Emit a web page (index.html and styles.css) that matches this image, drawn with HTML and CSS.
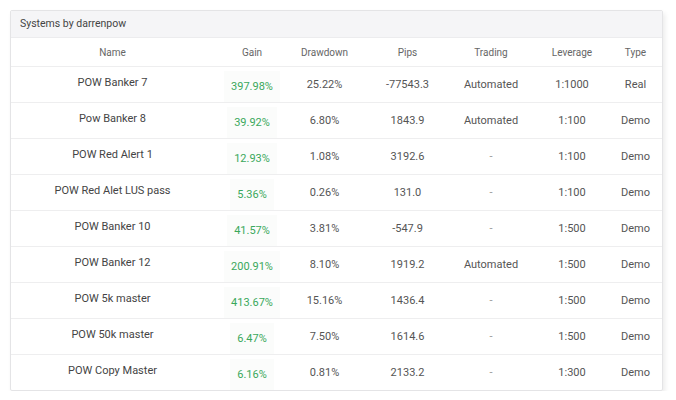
FILE: index.html
```html
<!DOCTYPE html>
<html>
<head>
<meta charset="utf-8">
<link rel="stylesheet" href="styles.css">
</head>
<body>
<div class="card">
  <div class="title">Systems by darrenpow</div>
  <div class="row head">
    <div class="c name">Name</div>
    <div class="c gain">Gain</div>
    <div class="c dd">Drawdown</div>
    <div class="c pips">Pips</div>
    <div class="c trad">Trading</div>
    <div class="c lev">Leverage</div>
    <div class="c type">Type</div>
  </div>
  <div class="row">
    <div class="c name">POW Banker 7</div>
    <div class="c gain"><span class="g">397.98%</span></div>
    <div class="c dd">25.22%</div>
    <div class="c pips">-77543.3</div>
    <div class="c trad">Automated</div>
    <div class="c lev">1:1000</div>
    <div class="c type">Real</div>
  </div>
  <div class="row">
    <div class="c name">Pow Banker 8</div>
    <div class="c gain"><span class="g">39.92%</span></div>
    <div class="c dd">6.80%</div>
    <div class="c pips">1843.9</div>
    <div class="c trad">Automated</div>
    <div class="c lev">1:100</div>
    <div class="c type">Demo</div>
  </div>
  <div class="row">
    <div class="c name">POW Red Alert 1</div>
    <div class="c gain"><span class="g">12.93%</span></div>
    <div class="c dd">1.08%</div>
    <div class="c pips">3192.6</div>
    <div class="c trad dash">-</div>
    <div class="c lev">1:100</div>
    <div class="c type">Demo</div>
  </div>
  <div class="row">
    <div class="c name">POW Red Alet LUS pass</div>
    <div class="c gain"><span class="g">5.36%</span></div>
    <div class="c dd">0.26%</div>
    <div class="c pips">131.0</div>
    <div class="c trad dash">-</div>
    <div class="c lev">1:100</div>
    <div class="c type">Demo</div>
  </div>
  <div class="row">
    <div class="c name">POW Banker 10</div>
    <div class="c gain"><span class="g">41.57%</span></div>
    <div class="c dd">3.81%</div>
    <div class="c pips">-547.9</div>
    <div class="c trad dash">-</div>
    <div class="c lev">1:500</div>
    <div class="c type">Demo</div>
  </div>
  <div class="row">
    <div class="c name">POW Banker 12</div>
    <div class="c gain"><span class="g">200.91%</span></div>
    <div class="c dd">8.10%</div>
    <div class="c pips">1919.2</div>
    <div class="c trad">Automated</div>
    <div class="c lev">1:500</div>
    <div class="c type">Demo</div>
  </div>
  <div class="row">
    <div class="c name">POW 5k master</div>
    <div class="c gain"><span class="g">413.67%</span></div>
    <div class="c dd">15.16%</div>
    <div class="c pips">1436.4</div>
    <div class="c trad dash">-</div>
    <div class="c lev">1:500</div>
    <div class="c type">Demo</div>
  </div>
  <div class="row">
    <div class="c name">POW 50k master</div>
    <div class="c gain"><span class="g">6.47%</span></div>
    <div class="c dd">7.50%</div>
    <div class="c pips">1614.6</div>
    <div class="c trad dash">-</div>
    <div class="c lev">1:500</div>
    <div class="c type">Demo</div>
  </div>
  <div class="row last">
    <div class="c name">POW Copy Master</div>
    <div class="c gain"><span class="g">6.16%</span></div>
    <div class="c dd">0.81%</div>
    <div class="c pips">2133.2</div>
    <div class="c trad dash">-</div>
    <div class="c lev">1:300</div>
    <div class="c type">Demo</div>
  </div>
</div>
</body>
</html>
```

FILE: styles.css
```css
html, body {
  margin: 0;
  padding: 0;
  background: #ffffff;
}
body {
  padding: 10px 0 0 10px;
  font-family: Roboto, "Liberation Sans", Arial, sans-serif;
}
.card {
  width: 651px;
  border: 1px solid #e4e4e6;
  border-radius: 2px;
  background: #fff;
  box-shadow: 2px 3px 5px rgba(0, 0, 0, 0.08);
}
.title {
  height: 26px;
  line-height: 26px;
  padding-left: 9px;
  background: #f5f5f7;
  border-bottom: 1px solid #ececee;
  font-size: 10.5px;
  color: #444;
}
.row {
  display: grid;
  grid-template-columns: 171px 106px 78px 83px 82px 73px 58px;
  height: 35px;
  border-bottom: 1px solid #eeeeef;
  font-size: 11px;
  color: #555;
}
.row.head {
  height: 28px;
  font-size: 10px;
  color: #666;
}
.row.last {
  border-bottom: none;
}
.c {
  display: flex;
  align-items: center;
  justify-content: center;
  white-space: nowrap;
}
.c.name { padding-left: 32px; padding-bottom: 5px; color: #444; }
.head .c.name { padding-bottom: 0; color: #666; }
.c.gain { padding-left: 34px; }
.c.dd { padding-right: 5px; }
.c.trad { padding-left: 2px; }
.c.lev { padding-left: 9px; }
.c.type { padding-left: 5px; }
.c.dash { color: #999; }
.g {
  display: flex;
  align-items: center;
  justify-content: center;
  height: 31px;
  padding: 0 7px;
  margin-top: 3px;
  color: #3aa85b;
  background: #fbfcfb;
}
```
